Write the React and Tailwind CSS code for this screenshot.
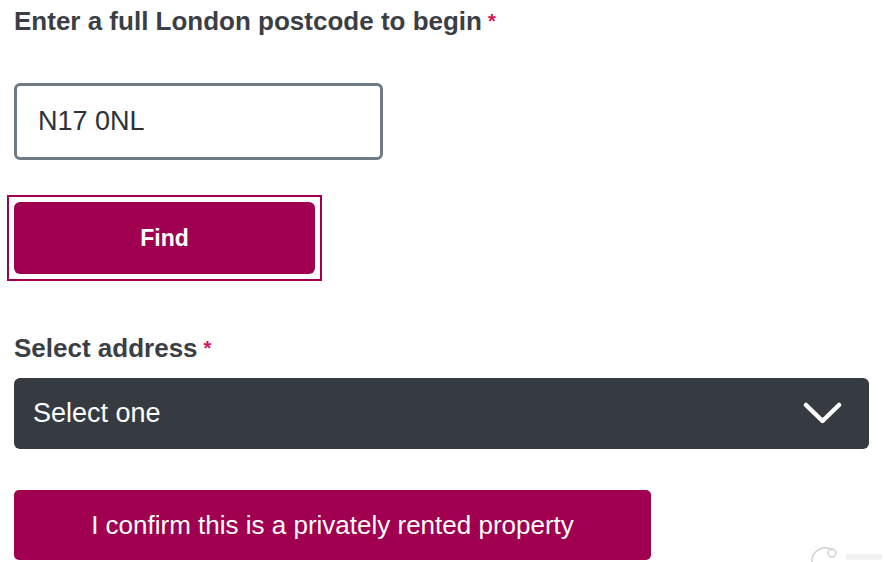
import React from "react";

const Star = () => <span className="text-[#d4145a] text-[20px] align-top ml-[6px]">*</span>;

const App = () => {
  return (
    <div
      className="relative w-[885px] h-[562px] overflow-hidden bg-white px-[14px] pt-[6px]"
      style={{ fontFamily: '"Liberation Sans", Arial, sans-serif' }}
    >
      <label className="block text-[26px] leading-[30px] font-bold text-[#3b3f45]">
        Enter a full London postcode to begin
        <Star />
      </label>

      <div className="mt-[47px] w-[369px] h-[77px] border-[3px] border-[#6e7b86] rounded-[6px] flex items-center pl-[21px] text-[27px] text-[#2e3136]">
        N17 0NL
      </div>

      <div className="mt-[35px] -ml-[7px] w-fit border-2 border-[#a0004f] p-[5px]">
        <button className="w-[301px] h-[72px] rounded-[6px] bg-[#a0004f] text-white text-[23px] font-bold">
          Find
        </button>
      </div>

      <label className="block mt-[52px] text-[26px] leading-[30px] font-bold text-[#3b3f45]">
        Select address
        <Star />
      </label>

      <div className="mt-[15px] w-[855px] h-[71px] rounded-[6px] bg-[#363b41] flex items-center justify-between pl-[19px] pr-[27px] text-white text-[27px]">
        <span>Select one</span>
        <svg width="39" height="23" viewBox="0 0 39 23" fill="none">
          <path d="M3 3 L19.5 19 L36 3" stroke="white" strokeWidth="4.5" strokeLinecap="round" strokeLinejoin="round" />
        </svg>
      </div>

      <button className="mt-[41px] w-[637px] h-[70px] rounded-[5px] bg-[#a0004f] text-white text-[26px]">
        I confirm this is a privately rented property
      </button>

      <div className="absolute right-0 bottom-0 w-[75px] h-[20px] flex items-end gap-[6px] opacity-40">
        <svg width="30" height="18" viewBox="0 0 30 18" fill="none">
          <path d="M2 18 A13 13 0 0 1 22 6" stroke="#888" strokeWidth="1.5" />
          <circle cx="22" cy="9" r="4" stroke="#888" strokeWidth="1.5" />
        </svg>
        <div className="w-[36px] h-[6px] mb-[2px] bg-[#ddd]" />
      </div>
    </div>
  );
};

export default App;
